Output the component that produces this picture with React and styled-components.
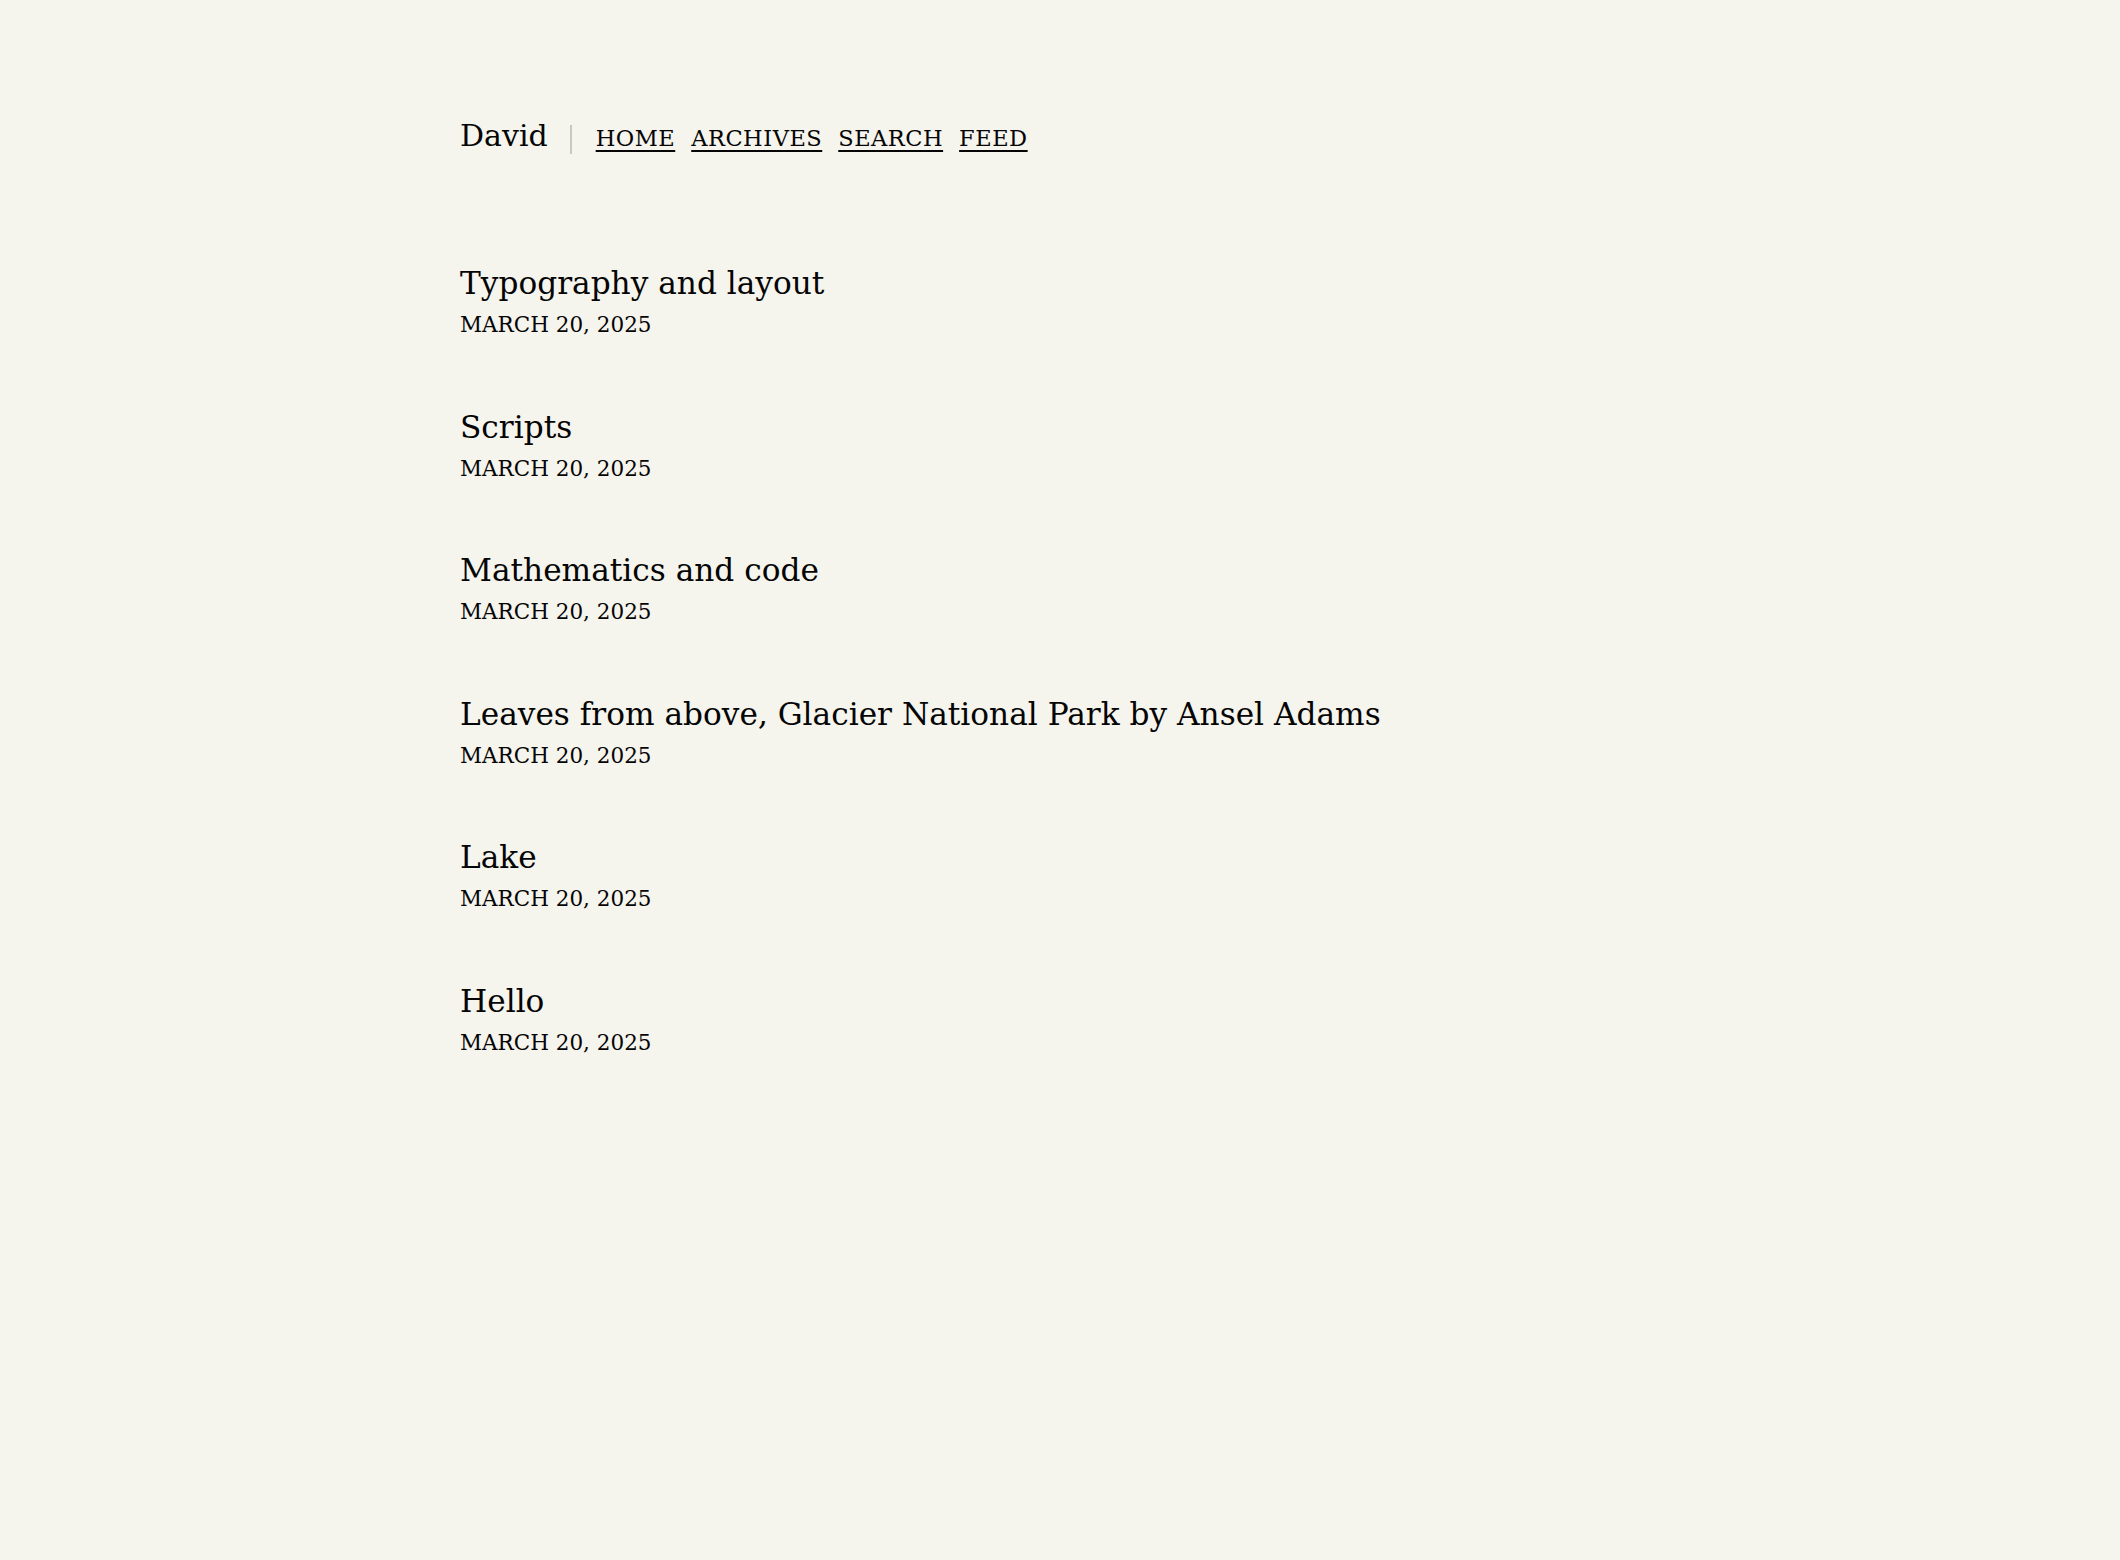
import React from "react"
import styled, { createGlobalStyle } from "styled-components"

const posts = [
  "Typography and layout",
  "Scripts",
  "Mathematics and code",
  "Leaves from above, Glacier National Park by Ansel Adams",
  "Lake",
  "Hello",
]

function App() {
  return (
    <Page>
      <GlobalStyle />
      <Header>
        <SiteName>David</SiteName>
        <Divider />
        <Nav>
          <NavLink href="#">Home</NavLink>
          <NavLink href="#">Archives</NavLink>
          <NavLink href="#">Search</NavLink>
          <NavLink href="#">Feed</NavLink>
        </Nav>
      </Header>

      <PostList>
        {posts.map((title) => (
          <Post key={title}>
            <PostTitle>{title}</PostTitle>
            <PostDate>March 20, 2025</PostDate>
          </Post>
        ))}
      </PostList>
    </Page>
  )
}

const GlobalStyle = createGlobalStyle`
  body {
    margin: 0;
    background: #f5f4ed;
    color: #050505;
    font-family: "DejaVu Serif", Georgia, serif;
  }
`

const Page = styled.div`
  width: 1200px;
  margin: 0 auto;
  padding-top: 116px;
  min-height: 1560px;
  box-sizing: border-box;
`

const Header = styled.header`
  display: flex;
  align-items: baseline;
`

const SiteName = styled.span`
  font-size: 30px;
  line-height: 40px;
`

const Divider = styled.span`
  align-self: center;
  width: 2px;
  height: 29px;
  background: #c8c8c2;
  margin: 6px 24px 0 22px;
`

const Nav = styled.nav`
  display: flex;
  gap: 16px;
`

const NavLink = styled.a`
  color: #050505;
  font-size: 22.5px;
  text-transform: uppercase;
  letter-spacing: 0.5px;
  text-decoration: underline;
  text-decoration-thickness: 2px;
  text-underline-offset: 4px;
`

const PostList = styled.div`
  margin-top: 105px;
  display: flex;
  flex-direction: column;
  gap: 59.5px;
`

const Post = styled.article`
  display: flex;
  flex-direction: column;
`

const PostTitle = styled.h2`
  margin: 0;
  font-weight: normal;
  font-size: 31.2px;
  line-height: 44px;
`

const PostDate = styled.span`
  font-size: 21.5px;
  line-height: 40px;
  text-transform: uppercase;
`

export default App
